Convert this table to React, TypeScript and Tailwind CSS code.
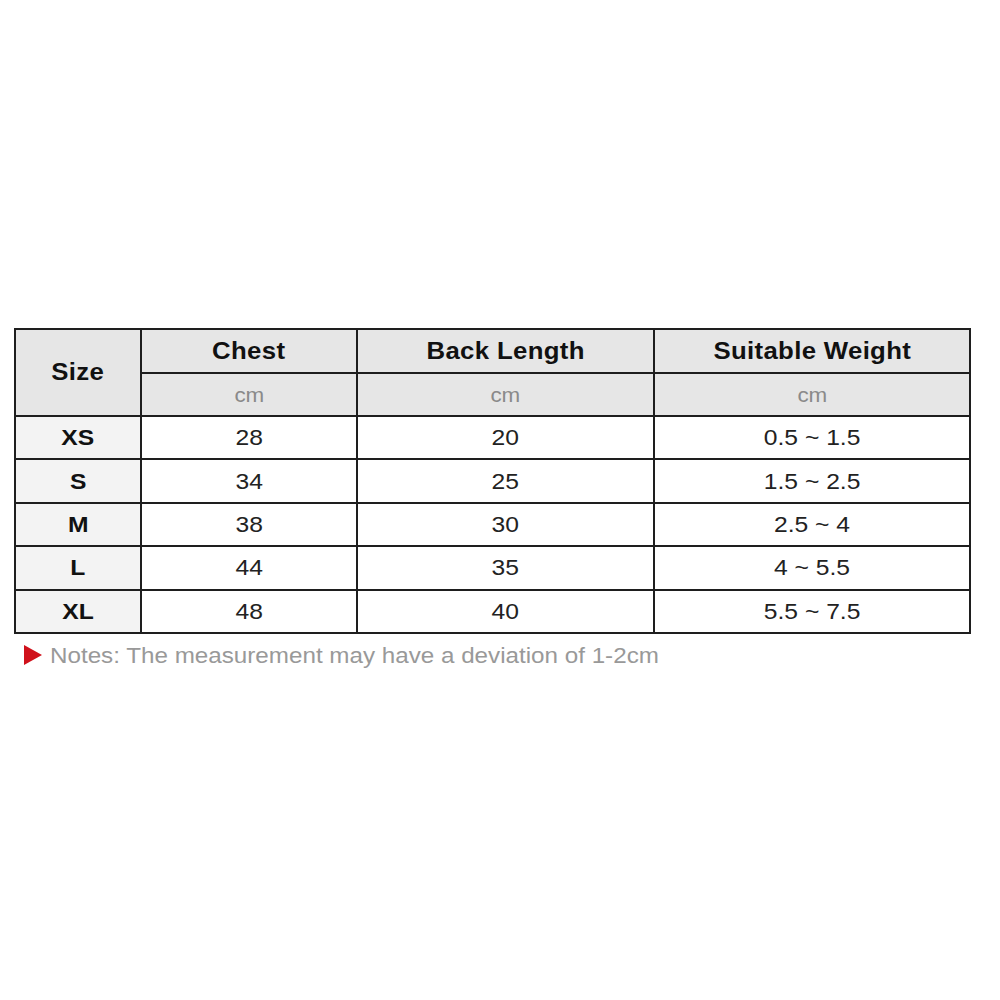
const rows = [
  { size: "XS", chest: "28", back: "20", weight: "0.5 ~ 1.5" },
  { size: "S", chest: "34", back: "25", weight: "1.5 ~ 2.5" },
  { size: "M", chest: "38", back: "30", weight: "2.5 ~ 4" },
  { size: "L", chest: "44", back: "35", weight: "4 ~ 5.5" },
  { size: "XL", chest: "48", back: "40", weight: "5.5 ~ 7.5" },
];

const cell = "border-2 border-[#1e1e1e]";

// glyphs in the picture are a bit wider than Liberation Sans
function Wide({ children }: { children: React.ReactNode }) {
  return <span className="inline-block scale-x-[1.12]">{children}</span>;
}

export default function App() {
  return (
    <div className="min-h-screen w-[1000px] bg-white pt-[328px] pl-[14px] font-['Liberation_Sans',Arial,sans-serif]">
      <table className="w-[957px] table-fixed border-collapse border-2 border-[#1e1e1e] text-center text-[#222]">
        <colgroup>
          <col className="w-[126px]" />
          <col className="w-[216px]" />
          <col className="w-[297px]" />
          <col />
        </colgroup>
        <thead>
          <tr className="h-[44px] bg-[#e6e6e6] text-[23px] font-bold tracking-[0.3px] text-[#111]">
            <th rowSpan={2} className={cell}><Wide>Size</Wide></th>
            <th className={cell}><Wide>Chest</Wide></th>
            <th className={cell}><Wide>Back Length</Wide></th>
            <th className={cell}><Wide>Suitable Weight</Wide></th>
          </tr>
          <tr className="h-[43px] bg-[#e6e6e6] text-[20px] text-[#8a8a8a]">
            <td className={cell}><Wide>cm</Wide></td>
            <td className={cell}><Wide>cm</Wide></td>
            <td className={cell}><Wide>cm</Wide></td>
          </tr>
        </thead>
        <tbody>
          {rows.map((r) => (
            <tr key={r.size} className="h-[43.4px] text-[22px]">
              <td className={`${cell} bg-[#f3f3f3] font-bold text-[#111]`}><Wide>{r.size}</Wide></td>
              <td className={cell}><Wide>{r.chest}</Wide></td>
              <td className={cell}><Wide>{r.back}</Wide></td>
              <td className={cell}><Wide>{r.weight}</Wide></td>
            </tr>
          ))}
        </tbody>
      </table>
      <div className="mt-[5px] flex items-center gap-[8px] pl-[10px] text-[22px] text-[#999]">
        <svg width="18" height="20" viewBox="0 0 18 20">
          <polygon points="0,0 18,10 0,20" fill="#d0111b" />
        </svg>
        <span className="inline-block origin-left scale-x-[1.1] whitespace-nowrap">
          Notes: The measurement may have a deviation of 1-2cm
        </span>
      </div>
    </div>
  );
}
